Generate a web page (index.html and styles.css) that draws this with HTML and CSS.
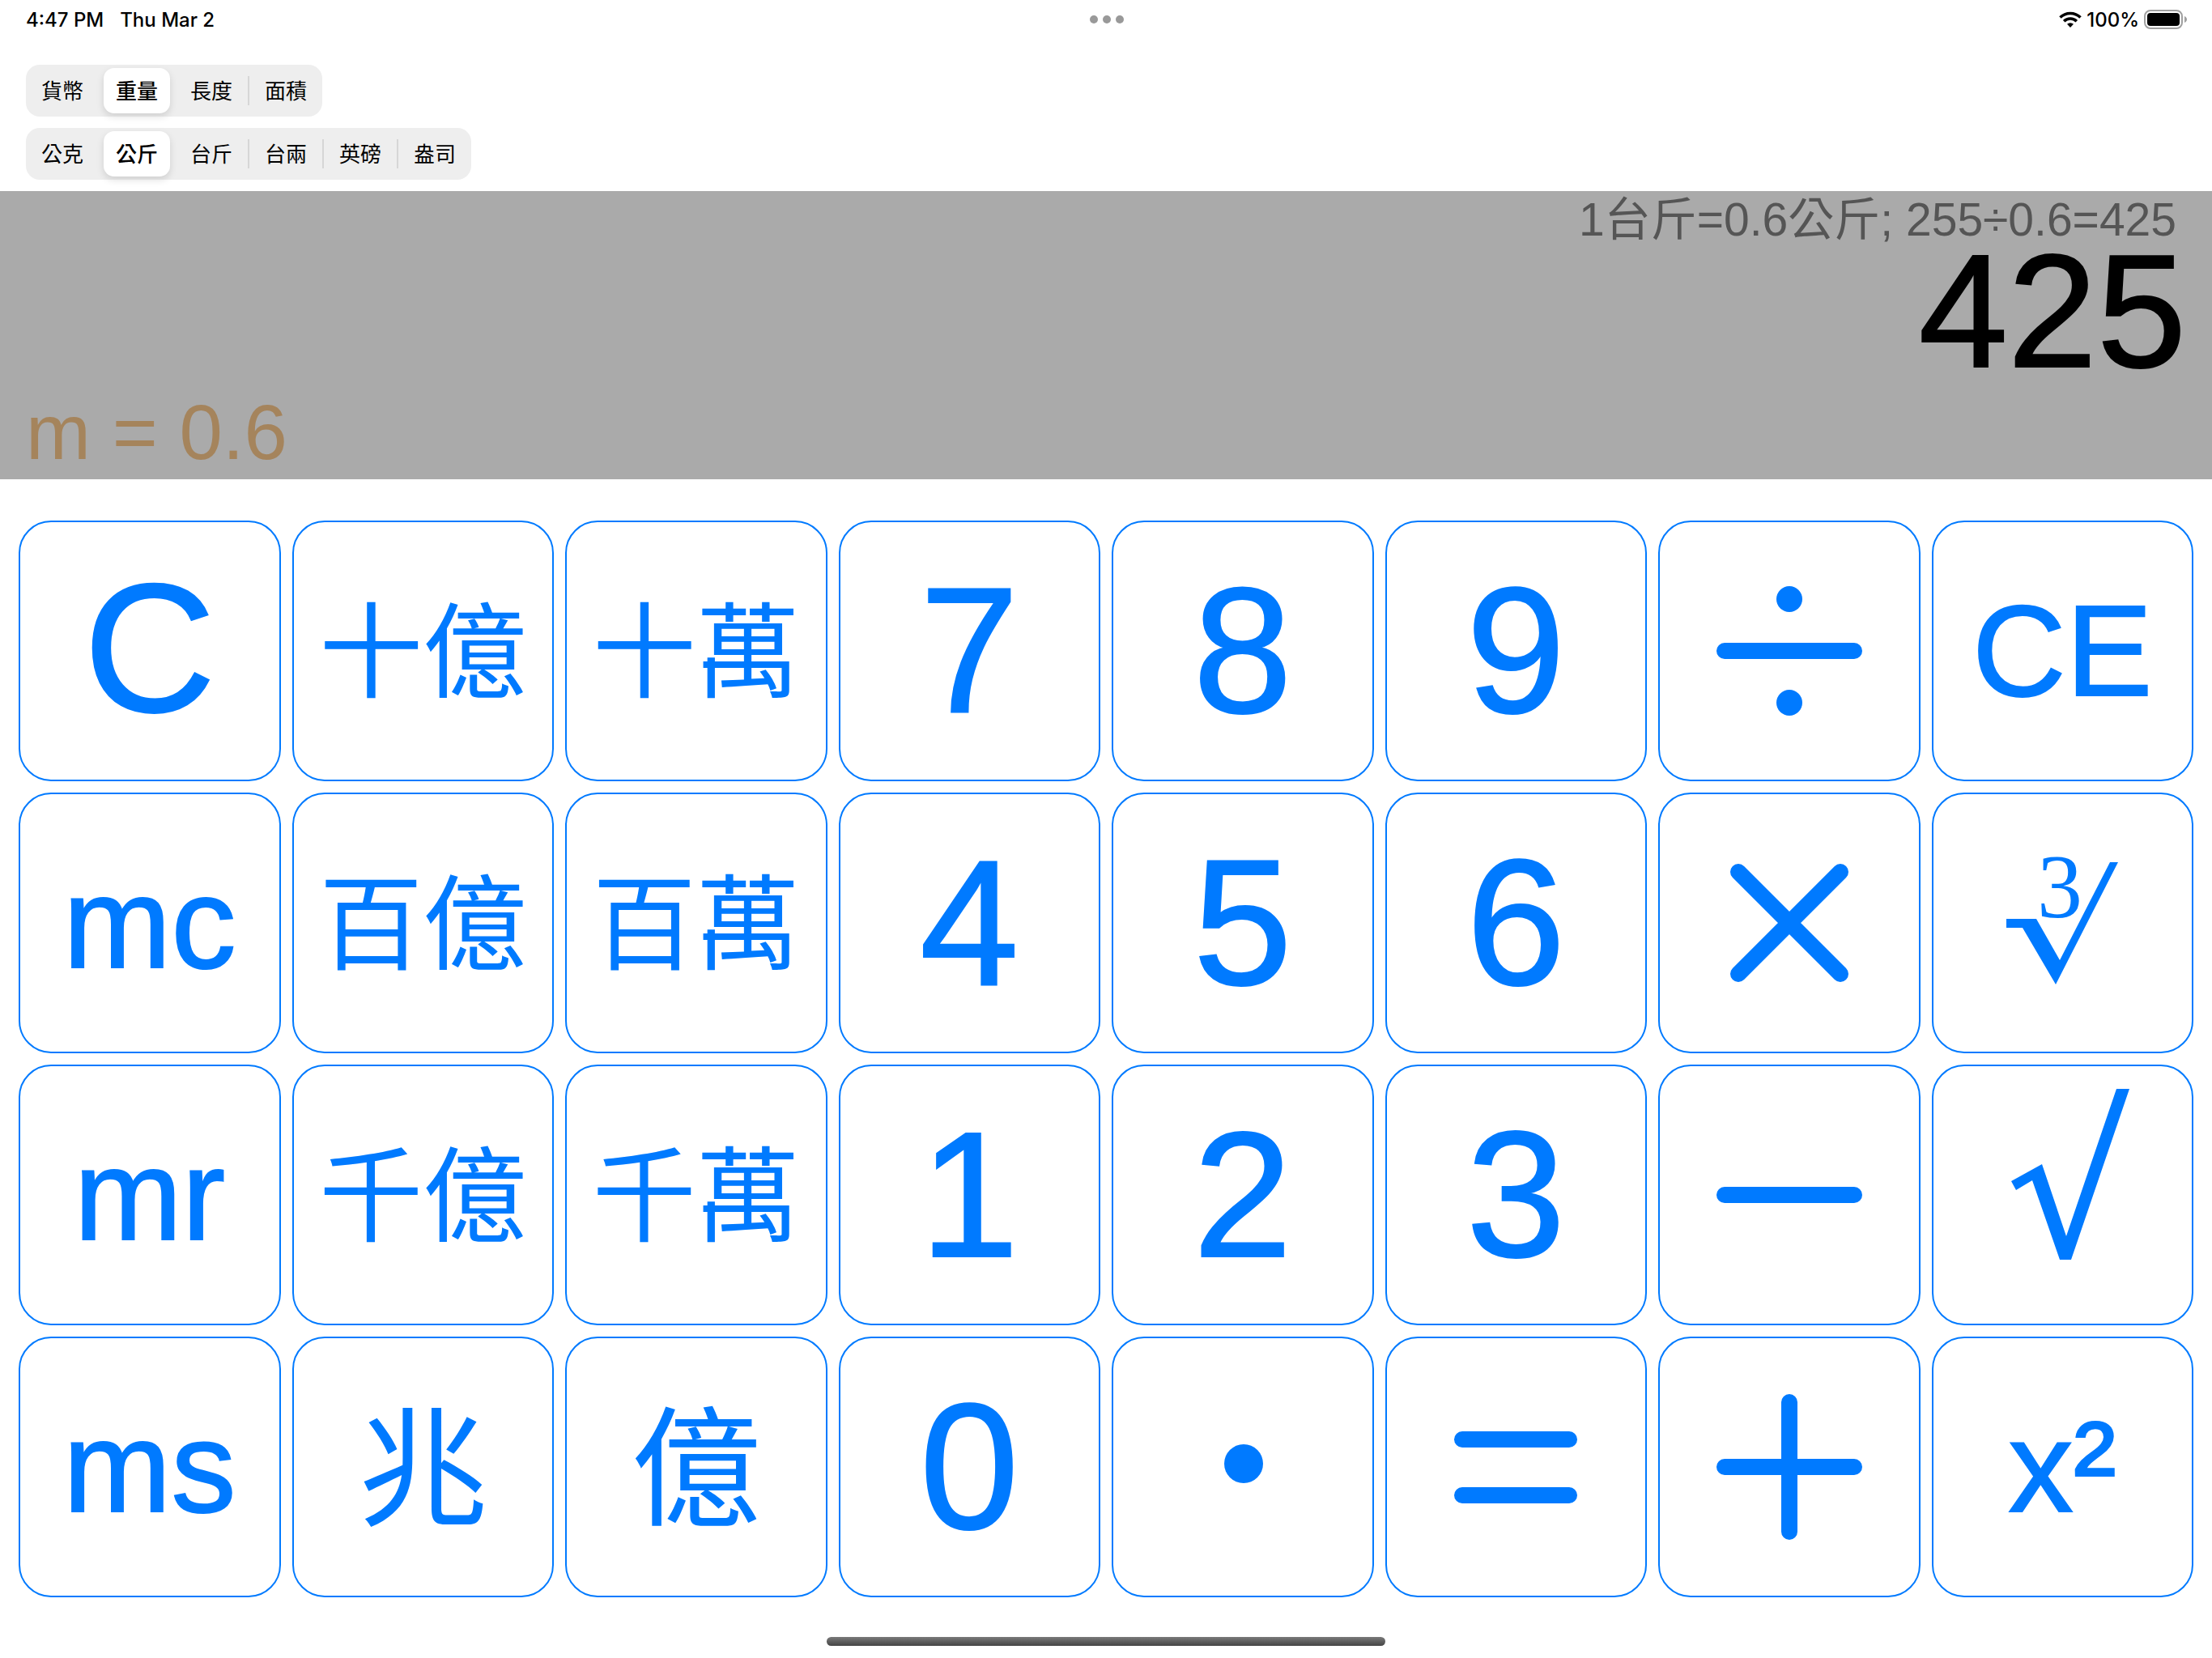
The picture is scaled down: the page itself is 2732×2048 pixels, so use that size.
FILE: index.html
```html
<!DOCTYPE html>
<html lang="zh-Hant">
<head>
<meta charset="utf-8">
<meta name="viewport" content="width=device-width, initial-scale=1">
<title>Calculator</title>
<link rel="stylesheet" href="styles.css">
</head>
<body>
<div class="app">
  <header class="status">
    <div class="status-side"><span>4:47 PM</span><span>Thu Mar 2</span></div>
    <div class="dots"><i></i><i></i><i></i></div>
    <div class="status-side status-end">
      <svg class="wifi" viewBox="0 0 28 20" aria-hidden="true">
        <path d="M1.500 7.600a17.700 17.700 0 0 1 25 0" fill="none" stroke="#000" stroke-width="3.600"/>
        <path d="M6.200 12.200a11 11 0 0 1 15.600 0" fill="none" stroke="#000" stroke-width="3.600"/>
        <path d="M14 20l-4-4.200a5.800 5.800 0 0 1 8 0z"/>
      </svg>
      <span>100%</span>
      <svg class="battery" viewBox="0 0 54 24" aria-hidden="true">
        <rect x="1" y="1" width="46" height="22" rx="7" fill="none" stroke="#a0a0a0" stroke-width="2"/>
        <rect x="4" y="4" width="40" height="16" rx="4"/>
        <path d="M50 8v8c4-1.500 4-6.500 0-8z" fill="#a0a0a0"/>
      </svg>
    </div>
  </header>

  <nav class="pickers">
    <fieldset class="segments">
      <label><input type="radio" name="kind"><span>貨幣</span></label>
      <label><input type="radio" name="kind" checked><span>重量</span></label>
      <label><input type="radio" name="kind"><span>長度</span></label>
      <label><input type="radio" name="kind"><span>面積</span></label>
    </fieldset>
    <fieldset class="segments">
      <label><input type="radio" name="unit"><span>公克</span></label>
      <label><input type="radio" name="unit" checked><span>公斤</span></label>
      <label><input type="radio" name="unit"><span>台斤</span></label>
      <label><input type="radio" name="unit"><span>台兩</span></label>
      <label><input type="radio" name="unit"><span>英磅</span></label>
      <label><input type="radio" name="unit"><span>盎司</span></label>
    </fieldset>
  </nav>

  <section class="display">
    <div class="history">1台斤=0.6公斤; 255÷0.6=425</div>
    <output class="result">425</output>
    <div class="memory">m = 0.6</div>
  </section>

  <main class="keys">
    <button class="key clear">C</button>
    <button class="key pair">十億</button>
    <button class="key pair">十萬</button>
    <button class="key digit">7</button>
    <button class="key digit">8</button>
    <button class="key digit">9</button>
    <button class="key" aria-label="divide"><svg viewBox="0 0 200 200"><path d="M20 100H180"/><circle cx="100" cy="36" r="16"/><circle cx="100" cy="164" r="16"/></svg></button>
    <button class="key word">CE</button>

    <button class="key word">mc</button>
    <button class="key pair">百億</button>
    <button class="key pair">百萬</button>
    <button class="key digit">4</button>
    <button class="key digit">5</button>
    <button class="key digit">6</button>
    <button class="key" aria-label="multiply"><svg viewBox="0 0 200 200"><path d="M37 37L163 163M163 37L37 163"/></svg></button>
    <button class="key" aria-label="cube root">
      <svg class="root" viewBox="0 0 200 200">
        <path d="M31 95H68L97 146L159 25H169L92 176L51 106H31Z"/>
        <text x="69" y="93">3</text>
      </svg>
    </button>

    <button class="key word">mr</button>
    <button class="key pair">千億</button>
    <button class="key pair">千萬</button>
    <button class="key digit">1</button>
    <button class="key digit">2</button>
    <button class="key digit">3</button>
    <button class="key" aria-label="subtract"><svg viewBox="0 0 200 200"><path d="M20 100H180"/></svg></button>
    <button class="key" aria-label="square root">
      <svg class="root" viewBox="0 0 200 200"><path d="M37 83L75 62L105 151L167 -31H183L111 180H97L63 82L43 94Z"/></svg>
    </button>

    <button class="key word">ms</button>
    <button class="key single">兆</button>
    <button class="key single">億</button>
    <button class="key digit">0</button>
    <button class="key" aria-label="decimal point"><svg viewBox="0 0 200 200"><circle cx="101" cy="96" r="24"/></svg></button>
    <button class="key" aria-label="equals"><svg viewBox="0 0 200 200"><path d="M34 66H166M34 135H166"/></svg></button>
    <button class="key" aria-label="add"><svg viewBox="0 0 200 200"><path d="M20 100H180M100 20V180"/></svg></button>
    <button class="key word">x²</button>
  </main>

  <footer class="home"><div class="home-bar"></div></footer>
</div>
</body>
</html>
```
FILE: styles.css
```css
* { box-sizing: border-box; }

body {
  margin: 0;
  background: #fff;
  color: #000;
  font-family: "Liberation Sans", "Noto Sans CJK TC", sans-serif;
}

.app {
  display: flex;
  flex-direction: column;
  min-height: 100vh;
}

/* Status bar */
.status {
  display: grid;
  grid-template-columns: 1fr auto 1fr;
  align-items: center;
  height: 48px;
  padding: 0 30px 0 32px;
  font-family: Inter, sans-serif;
  font-size: 24px;
  font-weight: 500;
}
.status-side {
  display: flex;
  align-items: center;
  gap: 20px;
}
.status-end {
  justify-content: flex-end;
  gap: 6px;
}
.wifi { width: 28px; height: 20px; }
.battery { width: 54px; height: 24px; }
.dots { display: flex; gap: 6px; }
.dots i {
  width: 10px;
  height: 10px;
  border-radius: 50%;
  background: #999;
}

/* Segmented controls */
.pickers {
  display: flex;
  flex-direction: column;
  align-items: flex-start;
  gap: 14px;
  padding: 32px 32px 14px;
}
.segments {
  display: flex;
  gap: 2px;
  margin: 0;
  padding: 0;
  border: 0;
  border-radius: 17px;
  background: #eee;
}
.segments label {
  position: relative;
  width: 90px;
  height: 64px;
  padding: 4px;
  font-size: 26px;
}
.segments input {
  position: absolute;
  opacity: 0;
}
.segments span {
  display: flex;
  align-items: center;
  justify-content: center;
  height: 56px;
  padding-bottom: 4px;
  border-radius: 13px;
}
.segments input:checked + span {
  background: #fff;
  font-weight: 500;
  box-shadow: 0 4px 10px rgba(0, 0, 0, .13);
}
.segments label + label::before {
  content: "";
  position: absolute;
  top: 14px;
  left: -2px;
  width: 2px;
  height: 36px;
  background: #d6d6d6;
}
.segments label:has(:checked)::before,
.segments label:has(:checked) + label::before { display: none; }

/* Display */
.display {
  display: flex;
  flex-direction: column;
  height: 356px;
  padding: 0 32px;
  background: #aaa;
}
.history {
  align-self: flex-end;
  padding-right: 12px;
  font-size: 57px;
  line-height: 70px;
  color: #555;
}
.result {
  align-self: flex-end;
  font-size: 198px;
  line-height: 158px;
  -webkit-text-stroke: 2px currentColor;
}
.memory {
  margin-top: auto;
  font-size: 96px;
  line-height: 116px;
  color: #a5845c;
}

/* Keypad */
.keys {
  display: grid;
  grid-template-columns: repeat(8, 1fr);
  grid-auto-rows: 322px;
  gap: 14px;
  padding: 51px 23px 0;
}
.key {
  display: flex;
  align-items: center;
  justify-content: center;
  padding: 0;
  border: 2px solid #007aff;
  border-radius: 40px;
  background: #fff;
  color: #007aff;
  font-family: "Liberation Sans", "Noto Sans CJK TC", sans-serif;
}
.clear { padding-bottom: 6px; font-size: 226px; }
.digit { font-size: 220px; }
.word { font-size: 160px; }
.clear, .digit, .word { -webkit-text-stroke: 2px currentColor; }
.pair { padding-bottom: 16px; font-size: 128px; }
.single { padding-bottom: 20px; font-size: 160px; }
.key svg {
  width: 200px;
  height: 200px;
  overflow: visible;
  fill: currentColor;
  stroke: currentColor;
  stroke-width: 20px;
  stroke-linecap: round;
}
.key svg circle, .key .root { stroke: none; }
.root text { font: 112px "Liberation Serif", serif; }

/* Home indicator */
.home {
  display: flex;
  justify-content: center;
  margin-top: auto;
  padding-bottom: 15px;
}
.home-bar {
  width: 690px;
  height: 11px;
  border-radius: 6px;
  background: linear-gradient(#7a7a7a, #444);
}
```
